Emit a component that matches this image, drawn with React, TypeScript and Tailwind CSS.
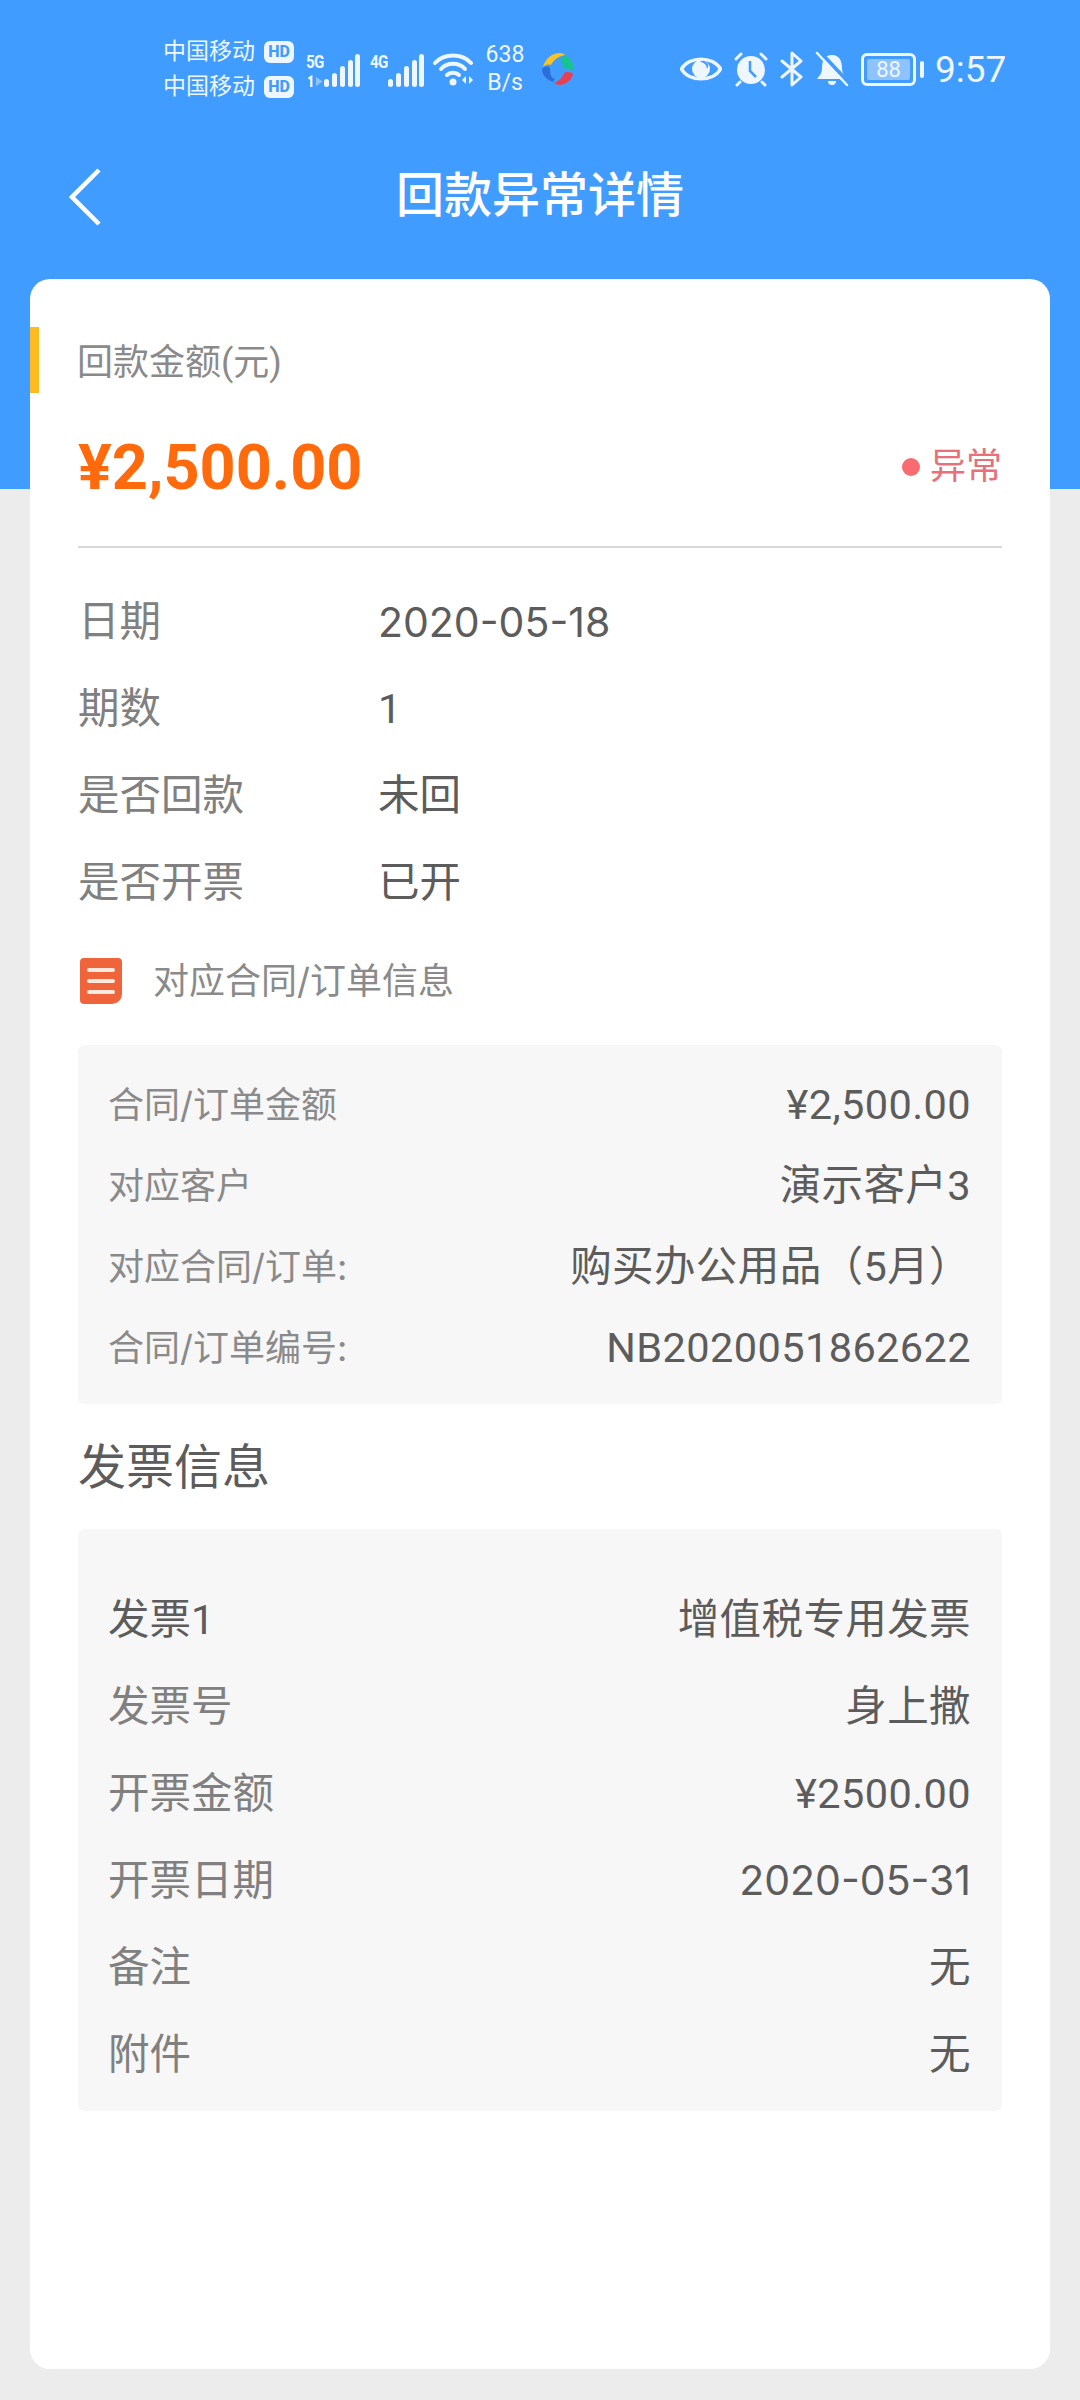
import React from "react";

function Carrier() {
  return (
    <div className="flex items-center h-[35px]">
      <span className="text-[23px] leading-[35px] text-[#eef6ff] w-[101px] whitespace-nowrap">中国移动</span>
      <span className="flex items-center justify-center w-[30px] h-[22px] rounded-[6px] bg-[#eef6ff] text-[#409cff] text-[16px] leading-none font-extrabold">HD</span>
    </div>
  );
}

function Bars() {
  return (
    <svg width="36" height="33" viewBox="0 0 36 33" className="block">
      <g fill="#eef6ff">
        <rect x="0" y="25" width="5" height="8" rx="2.5" />
        <rect x="8" y="19" width="5" height="14" rx="2.5" />
        <rect x="16" y="12" width="5" height="21" rx="2.5" />
        <rect x="24" y="6" width="5" height="27" rx="2.5" />
        <rect x="31" y="0" width="5" height="33" rx="2.5" />
      </g>
    </svg>
  );
}

function Gen({ text }: { text: string }) {
  return (
    <span className="block w-[18px] text-[19px] leading-[20px] font-bold tracking-[-1px] scale-x-[0.8] origin-left whitespace-nowrap">{text}</span>
  );
}

function StatusBar() {
  return (
    <div className="flex items-center h-[136px] pt-[2px] pl-[163px] text-[#eef6ff]">
      <div className="flex flex-col w-[143px]">
        <Carrier />
        <Carrier />
      </div>
      <div className="w-[18px] h-[36px] flex flex-col mt-[2px]">
        <Gen text="5G" />
        <svg width="18" height="14" viewBox="0 0 18 14" className="block mt-[3px]">
          <path d="M2 4 l3 -2 v11" fill="none" stroke="#eef6ff" strokeWidth="2.5" />
          <path d="M10 2 l7 5 l-7 5 z" fill="#8fc3ff" />
        </svg>
      </div>
      <div className="mt-[2px]"><Bars /></div>
      <div className="ml-[10px] w-[18px] mb-[14px]"><Gen text="4G" /></div>
      <div className="mt-[2px]"><Bars /></div>
      <svg width="42" height="36" viewBox="0 0 42 36" fill="none" className="ml-[9px] block">
        <path d="M2 12 C 11 2, 29 2, 38 12" stroke="#eef6ff" strokeWidth="4" strokeLinecap="round" />
        <path d="M8 18 C 14 11, 26 11, 32 18" stroke="#eef6ff" strokeWidth="4" strokeLinecap="round" />
        <path d="M14 24 C 17 21, 23 21, 26 24" stroke="#eef6ff" strokeWidth="4" strokeLinecap="round" />
        <circle cx="20" cy="31" r="3.5" fill="#eef6ff" />
        <path d="M33 25 v8 l-4 -4 z M36 25 l4 4 l-4 4 z" fill="#eef6ff" />
      </svg>
      <div className="flex flex-col items-center w-[40px] ml-[10px] text-[23px] leading-[28px]">
        <span>638</span>
        <span>B/s</span>
      </div>
      <svg width="34" height="34" viewBox="0 0 34 34" className="ml-[16px] block">
        <path d="M2 15 C 4 7, 11 1, 19 1 C 21 1, 23 2, 24 3 C 19 4, 14 6, 10 13 C 7 12, 4 13, 2 15 Z" fill="#f7c325" />
        <path d="M25 4 C 30 7, 33 12, 33 19 C 29 16, 25 17, 22 16 C 22 12, 21 9, 19 7 C 21 5, 23 4, 25 4 Z" fill="#16c48e" />
        <path d="M32 22 C 31 27, 26 32, 19 33 C 17 33, 14 32, 13 31 C 18 29, 21 26, 24 20 C 27 20, 30 20, 32 22 Z" fill="#e93f52" />
        <path d="M12 30 C 5 28, 1 22, 1 17 C 4 14, 7 14, 9 16 C 9 22, 10 26, 14 27 Z" fill="#2c6fd9" />
      </svg>
      <svg width="42" height="30" viewBox="0 0 42 30" className="ml-[105px] block">
        <path d="M1.5 15 C 9 2, 33 2, 40.5 15 C 33 28, 9 28, 1.5 15 Z" fill="none" stroke="#eef6ff" strokeWidth="3.5" />
        <circle cx="21" cy="15" r="9" fill="#eef6ff" />
        <path d="M20 8 a7 7 0 0 1 7 7 a5 5 0 0 0 -7 -7 z" fill="#409cff" />
      </svg>
      <svg width="36" height="36" viewBox="0 0 36 36" className="ml-[11px] block">
        <circle cx="18" cy="19" r="14" fill="#eef6ff" />
        <path d="M17 10 v10 l6 6" fill="none" stroke="#409cff" strokeWidth="2.5" />
        <path d="M3 8 L 8 3 M28 3 L 33 8 M7 31 L 4 34 M29 31 L 32 34" stroke="#eef6ff" strokeWidth="3" strokeLinecap="round" />
      </svg>
      <svg width="24" height="36" viewBox="0 0 24 36" fill="none" className="ml-[11px] block">
        <path d="M2 10 L 21 26 L 12 34 V 2 L 21 10 L 2 26" stroke="#eef6ff" strokeWidth="3" strokeLinecap="round" strokeLinejoin="round" />
      </svg>
      <svg width="34" height="36" viewBox="0 0 34 36" className="ml-[11px] block">
        <path d="M17 4 C 25 4, 27 11, 27 17 C 27 23, 30 25, 32 28 H 2 C 4 25, 7 23, 7 17 C 7 11, 9 4, 17 4 Z" fill="#eef6ff" />
        <path d="M13 30 h8 a4 4 0 0 1 -8 0 z" fill="#eef6ff" />
        <path d="M4 0 L 34 32" stroke="#409cff" strokeWidth="4" />
        <path d="M2 2 L 32 34" stroke="#eef6ff" strokeWidth="2.5" strokeLinecap="round" />
      </svg>
      <div className="ml-[12px] w-[55px] h-[33px] rounded-[6px] border-[3px] border-[#eef6ff] p-[3px] flex">
        <span className="flex-1 bg-[#8fc3ff] rounded-[2px] text-[22px] leading-[21px] text-center text-[#eef6ff]">88</span>
      </div>
      <div className="ml-[4px] w-[4px] h-[17px] rounded-[2px] bg-[#eef6ff]" />
      <span className="ml-[11px] text-[37px] leading-none whitespace-nowrap">9:57</span>
    </div>
  );
}

function Row({ label, value, wide }: { label: string; value: string; wide?: boolean }) {
  return (
    <div className="flex items-center h-[87px] text-[41.5px] leading-none pt-[3px]">
      <span className="w-[300px] text-[#808080]">{label}</span>
      <span className={wide ? "text-[#5c5c5c] text-[41px] font-['Inter','Noto_Sans_CJK_SC',sans-serif]" : "text-[#5c5c5c]"}>{value}</span>
    </div>
  );
}

function SmallRow({ label, value }: { label: string; value: string }) {
  return (
    <div className="flex items-center justify-between h-[81px]">
      <span className="text-[36px] text-[#8a8a8a] leading-none font-['Inter','Noto_Sans_CJK_SC',sans-serif] -ml-[1px]">{label}</span>
      <span className="text-[41.5px] text-[#5c5c5c] leading-none tracking-[0.4px]">{value}</span>
    </div>
  );
}

function InvoiceRow({ label, value, dark, wide }: { label: string; value: string; dark?: boolean; wide?: boolean }) {
  return (
    <div className="flex items-center justify-between h-[87px] text-[41.5px] leading-none">
      <span className={dark ? "text-[#5c5c5c] -ml-[1px]" : "text-[#808080] -ml-[1px]"}>{label}</span>
      <span className={wide ? "text-[#5c5c5c] text-[41px] font-['Inter','Noto_Sans_CJK_SC',sans-serif]" : "text-[#5c5c5c] tracking-[0.4px]"}>{value}</span>
    </div>
  );
}

export default function App() {
  return (
    <div className="w-[1080px] h-[2400px] bg-[#ececec] overflow-hidden font-['Roboto','Noto_Sans_CJK_SC',sans-serif]">
      <div className="h-[489px] bg-[#409cff]">
        <StatusBar />
        <div className="relative flex items-center justify-center h-[122px] pb-[2px]">
          <svg width="32" height="58" viewBox="0 0 32 58" fill="none" className="absolute left-[69px] top-[32px]">
            <path d="M30 2 L 3 29 L 30 56" stroke="#fff" strokeWidth="4.5" />
          </svg>
          <span className="text-[48px] font-medium text-white leading-none">回款异常详情</span>
        </div>
      </div>
      <div className="mx-[30px] -mt-[210px] h-[2090px] rounded-[20px] bg-white pt-[48px] relative">
        <div className="flex items-center h-[66px]">
          <div className="w-[9px] h-[66px] bg-[#fdbb21]" />
          <span className="ml-[38px] text-[36px] text-[#8a8a8a] leading-none pt-[6px]">回款金额(元)</span>
        </div>
        <div className="px-[48px]">
          <div className="flex items-center justify-between h-[80px] mt-[34px]">
            <span className="text-[63px] font-bold text-[#ff6a0d] leading-none">¥2,500.00</span>
            <span className="flex items-center text-[36px] text-[#e8707a] leading-none">
              <span className="w-[18px] h-[18px] rounded-full bg-[#f86c70] mr-[10px]" />
              异常
            </span>
          </div>
          <div className="h-[2px] bg-[#d8d8d8] mt-[39px]" />
          <div className="mt-[29px]">
            <Row label="日期" value="2020-05-18" wide />
            <Row label="期数" value="1" />
            <Row label="是否回款" value="未回" />
            <Row label="是否开票" value="已开" />
          </div>
          <div className="flex items-center h-[60px] mt-[26px]">
            <svg width="42" height="46" viewBox="0 0 42 46" className="block ml-[2px]">
              <path d="M4 0 H38 a4 4 0 0 1 4 4 V36 a10 10 0 0 1 -10 10 H4 a4 4 0 0 1 -4 -4 V4 a4 4 0 0 1 4 -4 z" fill="#f0643c" />
              <rect x="7" y="10" width="28" height="4" rx="2" fill="#ffe9df" />
              <rect x="7" y="21" width="28" height="4" rx="2" fill="#ffe9df" />
              <rect x="7" y="32" width="28" height="4" rx="2" fill="#ffe9df" />
            </svg>
            <span className="ml-[31px] text-[36px] text-[#8a8a8a] leading-none font-['Inter','Noto_Sans_CJK_SC',sans-serif]">对应合同/订单信息</span>
          </div>
          <div className="mt-[34px] bg-[#f7f7f7] rounded-[6px] px-[31px] pt-[19px] pb-[16px]">
            <SmallRow label="合同/订单金额" value="¥2,500.00" />
            <SmallRow label="对应客户" value="演示客户3" />
            <SmallRow label="对应合同/订单:" value="购买办公用品（5月）" />
            <SmallRow label="合同/订单编号:" value="NB2020051862622" />
          </div>
          <div className="mt-[34px] h-[60px] flex items-center text-[48px] text-[#5c5c5c] leading-none">发票信息</div>
          <div className="mt-[31px] bg-[#f7f7f7] rounded-[6px] px-[31px] pt-[47px] pb-[13px]">
            <InvoiceRow label="发票1" value="增值税专用发票" dark />
            <InvoiceRow label="发票号" value="身上撒" />
            <InvoiceRow label="开票金额" value="¥2500.00" />
            <InvoiceRow label="开票日期" value="2020-05-31" wide />
            <InvoiceRow label="备注" value="无" />
            <InvoiceRow label="附件" value="无" />
          </div>
        </div>
      </div>
    </div>
  );
}
